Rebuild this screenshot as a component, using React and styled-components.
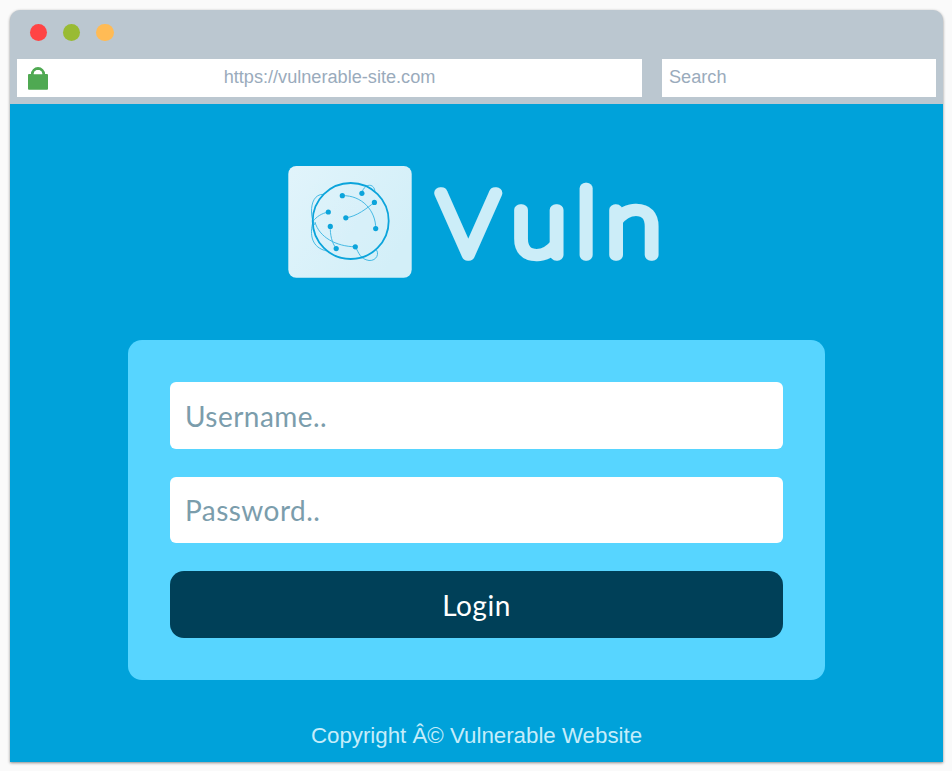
import React from 'react';
import styled, { createGlobalStyle } from 'styled-components';

const GlobalStyle = createGlobalStyle`
  *, *::before, *::after { box-sizing: border-box; }
  html, body { height: 100%; }
  body {
    margin: 0;
    background: #fafafa;
    font-family: "Liberation Sans", Arial, sans-serif;
  }
`;

const Page = styled.main`
  width: 952px;
  height: 771px;
  padding: 10px 9px 9px 10px;
  overflow: hidden;
`;

const BrowserWindow = styled.section`
  display: flex;
  flex-direction: column;
  height: 752px;
  overflow: hidden;
  background: #bbc7d0;
  border-radius: 10px 10px 0 0;
  box-shadow: 0 1px 3px rgba(0, 0, 0, 0.45);
`;

const Chrome = styled.header`
  height: 94px;
  flex: none;
`;

const WindowButtons = styled.div`
  display: flex;
  gap: 16px;
  padding: 14px 0 0 19.5px;
  height: 49px;
`;

const WindowButton = styled.span`
  width: 17.4px;
  height: 17.4px;
  border-radius: 50%;
  background: ${({ $color }) => $color};
`;

const AddressRow = styled.div`
  display: flex;
  gap: 20px;
  padding: 0 7px;
`;

const Bar = styled.div`
  display: flex;
  align-items: center;
  width: ${({ $width }) => $width}px;
  height: 38px;
  padding: 0 7px 2px;
  background: #fff;
  color: #9aabbc;
  font-size: 18.15px;
  line-height: 20px;
`;

const LockIcon = styled.svg`
  display: block;
  flex: none;
  width: 20px;
  height: 23px;
  margin: 3px 0 0 4px;
`;

const Url = styled.span`
  flex: 1;
  padding-right: 24px;
  text-align: center;
`;

const Site = styled.div`
  display: flex;
  flex-direction: column;
  align-items: center;
  flex: 1;
  padding-top: 56px;
  background: #00a2da;
`;

const Logo = styled.svg`
  display: block;
  flex: none;
  width: 385px;
  height: 124px;
`;

const Letter = styled.text`
  font-family: Lato, sans-serif;
  font-weight: 100;
  text-anchor: middle;
  fill: #ccedf8;
  stroke: #ccedf8;
  stroke-width: 11.4px;
  stroke-linejoin: round;
  stroke-linecap: round;
`;

const LoginCard = styled.form`
  display: flex;
  flex-direction: column;
  gap: 28px;
  flex: none;
  width: 697px;
  height: 340px;
  margin-top: 56px;
  padding: 42px;
  border-radius: 14px;
  background: #57d5ff;
`;

const Field = styled.input`
  display: block;
  width: 100%;
  height: 66.67px;
  padding: 1px 15px 0;
  border: 0;
  border-radius: 6px;
  outline: 0;
  background: #fff;
  font: 400 28px Lato, sans-serif;
  letter-spacing: 0.45px;
  color: #7b9dac;
  &::placeholder { color: #7b9dac; opacity: 1; }
`;

const LoginButton = styled.button`
  height: 66.67px;
  padding: 0;
  border: 0;
  border-radius: 14px;
  background: #004058;
  color: #fff;
  font: 400 28px Lato, sans-serif;
  letter-spacing: 0.5px;
`;

const Copyright = styled.footer`
  margin-top: 43px;
  color: #c5edfa;
  font-size: 22.3px;
  line-height: 26px;
`;

const NODES = [
  [342.3, 195.7], [361.9, 193.3], [374.4, 202.4], [328.3, 212], [345.8, 217.8],
  [330.3, 226.4], [375.7, 228.6], [336.2, 248.6], [355.3, 246.8],
];

const LETTERS = [
  { glyph: 'V', center: 468.2, size: 89, stretch: 1.06 },
  { glyph: 'u', center: 539, size: 91.5, stretch: 1.1 },
  { glyph: 'l', center: 586.2, size: 91.5, stretch: 1.04 },
  { glyph: 'n', center: 633.6, size: 91.5, stretch: 1.1 },
];

function VulnLogo() {
  return (
    <Logo viewBox="284 160 385 124">
      <defs>
        <linearGradient id="tile" x1="0" y1="0" x2="1" y2="0.6">
          <stop offset="0" stopColor="#e1f4fb" />
          <stop offset="1" stopColor="#d3eff8" />
        </linearGradient>
      </defs>
      <rect x="288.3" y="166" width="123.4" height="111.8" rx="8" fill="url(#tile)" />
      <g fill="none" stroke="#0ca4db">
        <circle cx="350.7" cy="221" r="38" strokeWidth="1.8" />
        <g strokeWidth="0.9" opacity="0.8">
          <path d="M323 194.3 C315 194.5 311.3 202 311.5 212 C311.7 218 313 222 315 225" />
          <path d="M313.2 221 C309 235 312 248 327 251" />
          <path d="M328.3 212 C321 213.5 316.5 217 313.2 221" />
          <path d="M315 222 C319 237 336 246.5 355.3 246.8" />
          <path d="M342.3 195.7 C362 195 376 211 375.7 228.6" />
          <path d="M345.8 217.8 C357 216.5 367 208 374.4 202.4" />
          <path d="M330.3 226.4 C330 235 332 243 336.2 248.6" />
          <path d="M361.9 193.3 C363.5 184 374 182 375 191.5" />
          <path d="M355.3 246.8 C359 253 360 259 369 260.5 C377 261 379.5 253 376 249.5" />
        </g>
      </g>
      <g fill="#0ca4db">
        {NODES.map(([cx, cy]) => <circle key={`${cx}-${cy}`} cx={cx} cy={cy} r="2.6" />)}
      </g>
      {LETTERS.map(({ glyph, center, size, stretch }) => (
        <Letter
          key={glyph}
          fontSize={size}
          transform={`translate(${center} 255.4) scale(${stretch} 1)`}
        >
          {glyph}
        </Letter>
      ))}
    </Logo>
  );
}

export default function App() {
  return (
    <>
      <GlobalStyle />
      <Page>
        <BrowserWindow>
          <Chrome>
            <WindowButtons>
              <WindowButton $color="#ff4444" />
              <WindowButton $color="#99bb33" />
              <WindowButton $color="#ffbb55" />
            </WindowButtons>
            <AddressRow>
              <Bar $width={625}>
                <LockIcon viewBox="0 0 20 23">
                  <path d="M4.3 8.5 V7.2 A5.7 5.7 0 0 1 15.7 7.2 V8.5" fill="none" stroke="#4fa952" strokeWidth="2.8" />
                  <rect x="0" y="7" width="20" height="15.7" rx="1" fill="#4fa952" />
                  <path d="M5.7 7.2 A4.3 4.3 0 0 1 14.3 7.2 Z" fill="#fff" />
                </LockIcon>
                <Url>https://vulnerable-site.com</Url>
              </Bar>
              <Bar $width={274}>Search</Bar>
            </AddressRow>
          </Chrome>
          <Site>
            <VulnLogo />
            <LoginCard onSubmit={(event) => event.preventDefault()}>
              <Field placeholder="Username.." />
              <Field type="password" placeholder="Password.." />
              <LoginButton>Login</LoginButton>
            </LoginCard>
            <Copyright>Copyright Â© Vulnerable Website</Copyright>
          </Site>
        </BrowserWindow>
      </Page>
    </>
  );
}
